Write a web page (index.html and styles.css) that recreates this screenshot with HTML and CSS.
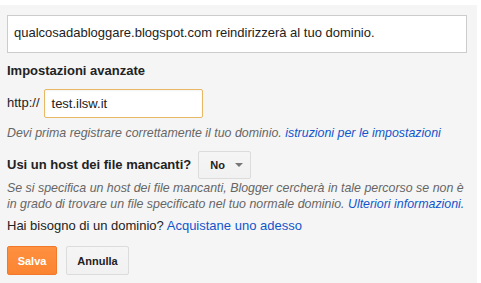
FILE: index.html
```html
<!DOCTYPE html>
<html lang="it">
<head>
<meta charset="utf-8">
<link rel="stylesheet" href="styles.css">
</head>
<body>
<div class="panel">
  <div class="notice">qualcosadabloggare.blogspot.com reindirizzerà al tuo dominio.</div>
  <h3 class="heading">Impostazioni avanzate</h3>
  <div class="url-row">
    <span class="prefix">http://</span>
    <div class="input">test.ilsw.it</div>
  </div>
  <p class="hint">Devi prima registrare correttamente il tuo dominio. <a class="link">istruzioni per le impostazioni</a></p>
  <div class="host-row">
    <span class="host-label">Usi un host dei file mancanti?</span>
    <div class="select">No <span class="caret"></span></div>
  </div>
  <p class="hint desc">Se si specifica un host dei file mancanti, Blogger cercherà in tale percorso se non è in grado di trovare un file specificato nel tuo normale dominio. <a class="link">Ulteriori informazioni.</a></p>
  <p class="buy">Hai bisogno di un dominio? <a class="link">Acquistane uno adesso</a></p>
  <div class="actions">
    <div class="btn btn-primary">Salva</div>
    <div class="btn btn-default">Annulla</div>
  </div>
</div>
</body>
</html>
```

FILE: styles.css
```css
html, body {
  margin: 0;
  padding: 0;
  background: #fff;
}
body {
  padding-top: 5px;
  font-family: Arial, "Liberation Sans", sans-serif;
  font-size: 13px;
  color: #222;
}
.panel {
  width: 477px;
  height: 278px;
  box-sizing: border-box;
  background: #f5f5f5;
  padding: 10px 10px 0 7px;
}
.notice {
  width: 460px;
  height: 38px;
  box-sizing: border-box;
  background: #fff;
  border: 1px solid #ccc;
  padding: 9px 0 0 6px;
  line-height: 16px;
}
.heading {
  margin: 10px 0 0;
  font-size: 13px;
  font-weight: bold;
  line-height: 16px;
  color: #222;
}
.url-row {
  display: flex;
  align-items: center;
  margin-top: 10px;
  gap: 4px;
}
.prefix {
  line-height: 16px;
  margin-top: -2px;
}
.input {
  width: 159px;
  height: 29px;
  box-sizing: border-box;
  border: 1px solid #e8b864;
  border-radius: 2px;
  background: #fff;
  padding: 6px 0 0 7px;
  line-height: 16px;
  box-shadow: inset 0 1px 2px rgba(0,0,0,0.05);
}
.hint {
  margin: 7px 0 0;
  font-size: 12.4px;
  font-style: italic;
  color: #666;
  line-height: 16px;
}
.link {
  color: #15c;
  text-decoration: none;
}
.host-row {
  display: flex;
  align-items: center;
  margin-top: 10px;
  gap: 7px;
}
.host-label {
  font-weight: bold;
  line-height: 16px;
}
.select {
  width: 53px;
  height: 28px;
  box-sizing: border-box;
  border: 1px solid #dcdcdc;
  border-radius: 2px;
  background: linear-gradient(#f5f5f5, #f1f1f1);
  font-size: 11px;
  font-weight: bold;
  color: #222;
  display: flex;
  align-items: center;
  padding-left: 11px;
  gap: 10px;
}
.caret {
  width: 0;
  height: 0;
  border-left: 4px solid transparent;
  border-right: 4px solid transparent;
  border-top: 4px solid #777;
}
.desc {
  margin-top: 1px;
}
.buy {
  margin: 6px 0 0;
  line-height: 16px;
}
.actions {
  display: flex;
  gap: 9px;
  margin-top: 12px;
}
.btn {
  height: 29px;
  box-sizing: border-box;
  border-radius: 2px;
  font-size: 11px;
  font-weight: bold;
  display: flex;
  align-items: center;
  justify-content: center;
}
.btn-primary {
  width: 50px;
  background: linear-gradient(#fe9040, #fb8431);
  border: 1px solid #f2782c;
  color: #fff;
}
.btn-default {
  width: 63px;
  background: linear-gradient(#f5f5f5, #f1f1f1);
  border: 1px solid #dcdcdc;
  color: #222;
}
```
